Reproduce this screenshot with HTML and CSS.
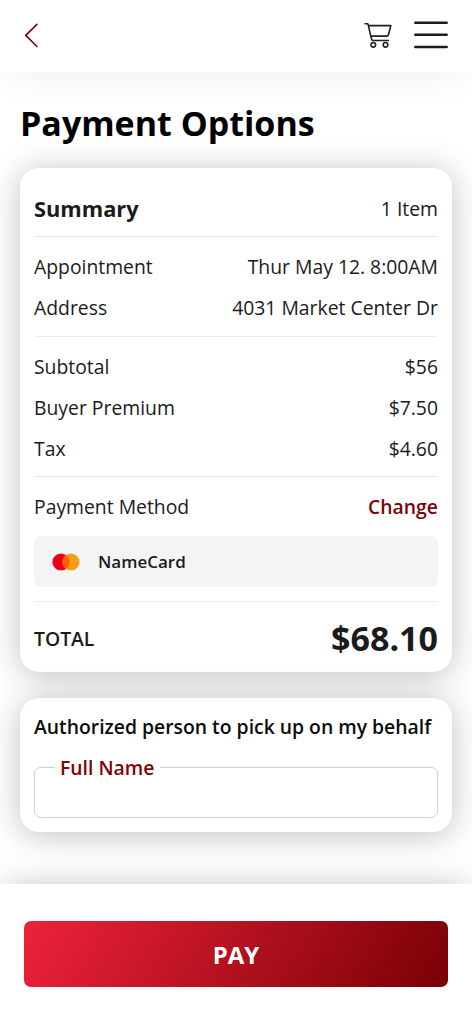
FILE: index.html
```html
<!DOCTYPE html>
<html lang="en">
<head>
<meta charset="utf-8">
<meta name="viewport" content="width=device-width, initial-scale=1">
<title>Payment Options</title>
<link rel="stylesheet" href="styles.css">
</head>
<body>
<div class="page">
  <header class="topbar">
    <button class="icon-button" aria-label="Back">
      <svg width="14" height="26" viewBox="0 0 14 26" fill="none" stroke="#7d0a10" stroke-width="1.7" stroke-linecap="round" stroke-linejoin="round"><path d="M12.9 2.3 1.8 13.3l11.1 11.2"/></svg>
    </button>
    <div class="topbar-actions">
      <button class="icon-button" aria-label="Cart">
        <svg width="28" height="26" viewBox="0 0 28 26" fill="none" stroke="#1d1f24" stroke-width="1.6" stroke-linecap="round" stroke-linejoin="round"><path d="M1 1.8h2.2q.8 0 1 .8L7.2 16.1q.6 2.4 2 2.4h15.2M4.6 3.6h22.2l-2.2 8.6q-.5 1.9-2.2 1.9H7.1"/><circle cx="9.3" cy="22.8" r="2.3"/><circle cx="21.5" cy="22.8" r="2.3"/></svg>
      </button>
      <button class="icon-button" aria-label="Menu">
        <svg width="34" height="28" viewBox="0 0 34 28" fill="none" stroke="#1a1c22" stroke-width="2.5" stroke-linecap="round"><path d="M1.3 1.7h31.4M1.3 13.8h31.4M1.3 26h31.4"/></svg>
      </button>
    </div>
  </header>

  <main class="content">
    <h1 class="title">Payment Options</h1>

    <section class="card summary">
      <div class="group group-head">
        <div class="row"><h2 class="heading">Summary</h2><span class="value">1 Item</span></div>
      </div>
      <div class="group">
        <div class="row"><span>Appointment</span><span class="value">Thur May 12. 8:00AM</span></div>
        <div class="row"><span>Address</span><span class="value">4031 Market Center Dr</span></div>
      </div>
      <div class="group">
        <div class="row"><span>Subtotal</span><span class="value">$56</span></div>
        <div class="row"><span>Buyer Premium</span><span class="value">$7.50</span></div>
        <div class="row"><span>Tax</span><span class="value">$4.60</span></div>
      </div>
      <div class="group group-method">
        <div class="row"><span>Payment Method</span><a class="change">Change</a></div>
        <div class="method">
          <svg width="28" height="18" viewBox="0 0 28 18"><circle cx="9" cy="9" r="8.6" fill="#eb001b"/><circle cx="19" cy="9" r="8.6" fill="#f79e1b"/><path d="M14 2a8.6 8.6 0 0 1 0 14a8.6 8.6 0 0 1 0-14z" fill="#ff5f00"/></svg>
          <span class="method-name">NameCard</span>
        </div>
      </div>
      <div class="total"><span class="total-label">TOTAL</span><strong class="total-value">$68.10</strong></div>
    </section>

    <section class="card pickup">
      <h2 class="pickup-title">Authorized person to pick up on my behalf</h2>
      <fieldset class="field"><legend class="field-label">Full Name</legend></fieldset>
    </section>
  </main>

  <footer class="footer"><button class="pay">PAY</button></footer>
</div>
</body>
</html>
```
FILE: styles.css
```css
* { box-sizing: border-box; }
body {
  margin: 0;
  background: #fff;
  color: #1b1b1b;
  font-family: "Open Sans", "Noto Sans", sans-serif;
  font-size: 19.35px;
}
h1, h2 { margin: 0; }
button { border: 0; padding: 0; background: none; font: inherit; }
.page { display: flex; flex-direction: column; height: 1024px; overflow: hidden; }
.topbar {
  flex: none;
  display: flex;
  justify-content: space-between;
  align-items: center;
  height: 72px;
  padding: 0 24px 2px;
  background: #fff;
  box-shadow: 0 10px 36px -6px rgba(0, 0, 0, .06);
}
.icon-button { display: flex; }
.icon-button svg { display: block; }
.topbar-actions { display: flex; align-items: center; gap: 22px; }
.content { flex: 1; padding: 24px 20px 0; }
.title { height: 71.5px; line-height: 54px; font-size: 34px; font-weight: 700; color: #000; white-space: nowrap; }
.card {
  padding: 0 14px;
  border-radius: 19px;
  background: #fff;
  box-shadow: 0 3px 32px rgba(0, 0, 0, .25);
}
.summary { height: 504.5px; }
.group { padding: 9px 0 7px; border-bottom: 1px solid #ececec; }
.row { display: flex; justify-content: space-between; align-items: center; height: 41.2px; white-space: nowrap; }
.group-head { padding: 20px 0 7.5px; }
.heading { font-size: 21.8px; font-weight: 700; }
.change { font-weight: 600; color: #7d0306; }
.group-method { padding-bottom: 14px; }
.method {
  display: flex;
  align-items: center;
  gap: 18px;
  height: 51px;
  margin-top: 9px;
  padding: 0 18px;
  border-radius: 8px;
  background: #f4f4f4;
}
.method-name { font-size: 17px; font-weight: 600; }
.total { display: flex; justify-content: space-between; align-items: center; height: 70px; padding-top: 2px; }
.total-label { font-weight: 600; }
.total-value { font-size: 34px; font-weight: 700; }
.pickup { height: 134.5px; margin-top: 25.5px; padding-top: 15.5px; }
.pickup-title { line-height: 28px; font-size: 19.35px; font-weight: 600; color: #0c0c0c; white-space: nowrap; }
.field {
  height: 64px;
  margin: 12.5px 0 0;
  padding: 0 0 0 20px;
  border: 1px solid #ced0da;
  border-radius: 7px;
}
.field-label { padding: 0 6px 0 5px; line-height: 28px; font-weight: 600; color: #7d0306; }
.footer {
  flex: none;
  position: relative;
  height: 140px;
  padding: 37px 24px 0;
  background: #fff;
  box-shadow: 0 0 30px -4px rgba(0, 0, 0, .28);
}
.pay {
  display: block;
  width: 100%;
  height: 66px;
  border-radius: 7px;
  background: linear-gradient(120deg, #ee223a, #790005);
  color: #fff;
  font-size: 24px;
  font-weight: 700;
}
```
